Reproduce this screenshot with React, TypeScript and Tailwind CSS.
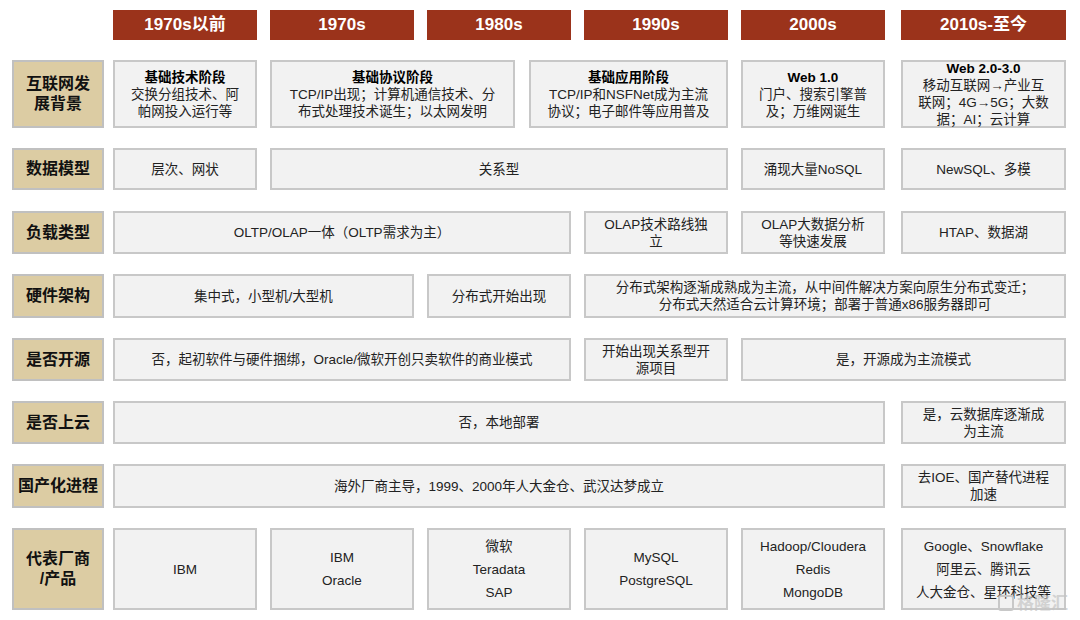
const font = { fontFamily: '"Liberation Sans", "Noto Sans CJK SC", sans-serif' };

type C = { w: number; gap?: number; lines: string[]; bold?: boolean; spaced?: boolean };

function Cell({ c }: { c: C }) {
  return (
    <div
      className="flex shrink-0 flex-col items-center justify-center border-2 border-[#c8c8c8] bg-[#f2f2f2] text-center text-[13.5px] leading-[17px] text-[#222]"
      style={{ width: c.w, marginLeft: c.gap ?? 13 }}
    >
      {c.lines.map((l, i) => (
        <div key={i} className={`${c.bold && i === 0 ? 'font-bold text-black' : ''} ${c.spaced ? 'my-[3px]' : ''}`}>
          {l}
        </div>
      ))}
    </div>
  );
}

function Row({ label, h, mt, cells }: { label: string[]; h: number; mt: number; cells: C[] }) {
  return (
    <div className="flex" style={{ height: h, marginTop: mt }}>
      <div className="flex w-[92px] shrink-0 flex-col items-center justify-center border-2 border-[#c0c0c0] bg-[#dccca3] text-[16px] font-bold leading-[20px] text-[#111]">
        {label.map((l) => (
          <div key={l}>{l}</div>
        ))}
      </div>
      <div className="flex" style={{ marginLeft: -4 }}>
        {cells.map((c, i) => (
          <Cell key={i} c={c} />
        ))}
      </div>
    </div>
  );
}

const headers: [string, number, number][] = [
  ['1970s以前', 144, 0],
  ['1970s', 144, 13],
  ['1980s', 144, 13],
  ['1990s', 144, 13],
  ['2000s', 144, 13],
  ['2010s-至今', 165, 16],
];

const arrow = <span style={{ fontFamily: '"Noto Sans CJK SC", sans-serif' }}>→</span>;

export default function App() {
  return (
    <div className="relative h-[620px] w-[1080px] bg-white pl-[12px] pt-[10px]" style={font}>
      <div className="flex h-[30px] pl-[101px]">
        {headers.map(([t, w, g]) => (
          <div
            key={t}
            className="flex items-center justify-center bg-[#9b331b] text-[17px] font-bold text-white"
            style={{ width: w, marginLeft: g }}
          >
            {t}
          </div>
        ))}
      </div>
      <Row
        label={['互联网发', '展背景']}
        h={68}
        mt={20}
        cells={[
          { w: 144, lines: ['基础技术阶段', '交换分组技术、阿', '帕网投入运行等'], bold: true },
          { w: 245, lines: ['基础协议阶段', 'TCP/IP出现；计算机通信技术、分', '布式处理技术诞生；以太网发明'], bold: true },
          { w: 199, gap: 14, lines: ['基础应用阶段', 'TCP/IP和NSFNet成为主流', '协议；电子邮件等应用普及'], bold: true },
          { w: 144, lines: ['Web 1.0', '门户、搜索引擎普', '及；万维网诞生'], bold: true },
          { w: 165, gap: 16, lines: ['Web 2.0-3.0', '移动互联网→产业互', '联网；4G→5G；大数', '据；AI；云计算'], bold: true },
        ]}
      />
      <Row
        label={['数据模型']}
        h={42}
        mt={20}
        cells={[
          { w: 144, lines: ['层次、网状'] },
          { w: 458, lines: ['关系型'] },
          { w: 144, lines: ['涌现大量NoSQL'] },
          { w: 165, gap: 16, lines: ['NewSQL、多模'] },
        ]}
      />
      <Row
        label={['负载类型']}
        h={43}
        mt={21}
        cells={[
          { w: 458, lines: ['OLTP/OLAP一体（OLTP需求为主）'] },
          { w: 144, lines: ['OLAP技术路线独', '立'] },
          { w: 144, lines: ['OLAP大数据分析', '等快速发展'] },
          { w: 165, gap: 16, lines: ['HTAP、数据湖'] },
        ]}
      />
      <Row
        label={['硬件架构']}
        h={44}
        mt={20}
        cells={[
          { w: 301, lines: ['集中式，小型机/大型机'] },
          { w: 144, lines: ['分布式开始出现'] },
          { w: 482, lines: ['分布式架构逐渐成熟成为主流，从中间件解决方案向原生分布式变迁；', '分布式天然适合云计算环境；部署于普通x86服务器即可'] },
        ]}
      />
      <Row
        label={['是否开源']}
        h={43}
        mt={20}
        cells={[
          { w: 458, lines: ['否，起初软件与硬件捆绑，Oracle/微软开创只卖软件的商业模式'] },
          { w: 144, lines: ['开始出现关系型开', '源项目'] },
          { w: 325, lines: ['是，开源成为主流模式'] },
        ]}
      />
      <Row
        label={['是否上云']}
        h={43}
        mt={20}
        cells={[
          { w: 772, lines: ['否，本地部署'] },
          { w: 165, gap: 16, lines: ['是，云数据库逐渐成', '为主流'] },
        ]}
      />
      <Row
        label={['国产化进程']}
        h={44}
        mt={20}
        cells={[
          { w: 772, lines: ['海外厂商主导，1999、2000年人大金仓、武汉达梦成立'] },
          { w: 165, gap: 16, lines: ['去IOE、国产替代进程', '加速'] },
        ]}
      />
      <Row
        label={['代表厂商', '/产品']}
        h={82}
        mt={20}
        cells={[
          { w: 144, lines: ['IBM'], spaced: true },
          { w: 144, lines: ['IBM', 'Oracle'], spaced: true },
          { w: 144, lines: ['微软', 'Teradata', 'SAP'], spaced: true },
          { w: 144, lines: ['MySQL', 'PostgreSQL'], spaced: true },
          { w: 144, lines: ['Hadoop/Cloudera', 'Redis', 'MongoDB'], spaced: true },
          { w: 165, gap: 16, lines: ['Google、Snowflake', '阿里云、腾讯云', '人大金仓、星环科技等'], spaced: true },
        ]}
      />
      <div className="absolute bottom-[4px] right-[12px] flex items-center gap-[3px] text-[17px] font-bold text-[#c4c4c4]/70">
        <span className="inline-block h-[16px] w-[16px] rounded-[3px] border-2 border-[#c8c8c8]" />
        格隆汇
      </div>
    </div>
  );
}
